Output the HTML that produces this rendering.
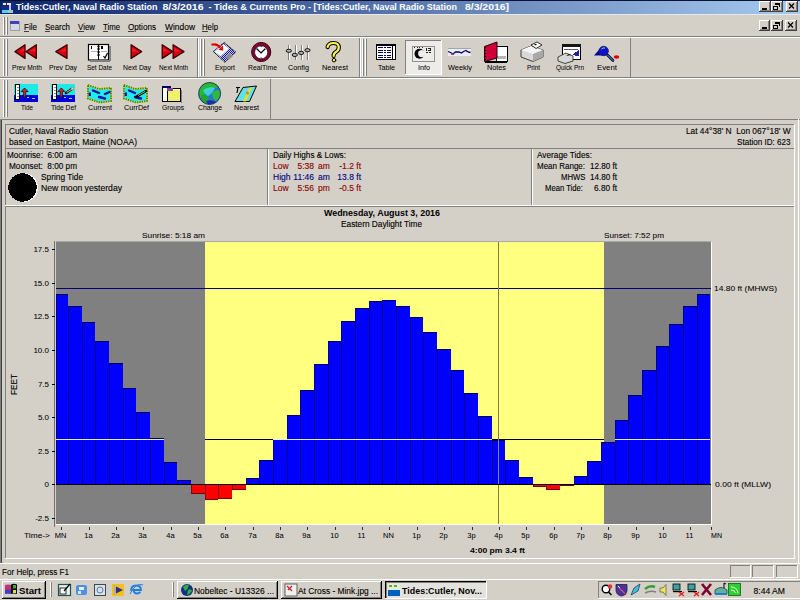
<!DOCTYPE html><html><head><meta charset="utf-8"><style>html,body{margin:0;padding:0;width:800px;height:600px;overflow:hidden;background:#D4D0C8;font-family:"Liberation Sans",sans-serif}text{white-space:pre}</style></head><body><svg width="800" height="600" viewBox="0 0 800 600" shape-rendering="crispEdges" font-family="'Liberation Sans', sans-serif" style="display:block"><rect x="0" y="0" width="800" height="600" fill="#D4D0C8" />
<defs><linearGradient id="tg" x1="0" x2="1" y1="0" y2="0"><stop offset="0" stop-color="#0A246A"/><stop offset="1" stop-color="#A6CAF0"/></linearGradient></defs>
<rect x="0" y="0" width="800" height="14" fill="url(#tg)" />
<rect x="0" y="14" width="800" height="1" fill="#E8E8E8" />
<rect x="2" y="2" width="12" height="11" fill="#102890" />
<rect x="3" y="3" width="3" height="1.5" fill="#E0F0D0" />
<rect x="7" y="3" width="4" height="1.5" fill="#E8F0C0" />
<rect x="3" y="4.5" width="8" height="1" fill="#203020" />
<rect x="9" y="5" width="2" height="5" fill="#C0C8F0" />
<rect x="2" y="9.5" width="6" height="3" fill="#50D0E8" />
<rect x="8" y="10" width="5" height="2.5" fill="#A0C8C8" />
<text x="16" y="10" font-size="8.8" font-weight="700" fill="#FFFFFF" textLength="141.5" lengthAdjust="spacingAndGlyphs" >Tides:Cutler, Naval Radio Station</text>
<text x="162.5" y="10" font-size="8.8" font-weight="700" fill="#FFFFFF" textLength="41" lengthAdjust="spacingAndGlyphs" >8/3/2016</text>
<text x="208.5" y="10" font-size="8.8" font-weight="700" fill="#FFFFFF" textLength="102.5" lengthAdjust="spacingAndGlyphs" >- Tides &amp; Currents Pro -</text>
<text x="313.5" y="10" font-size="8.8" font-weight="700" fill="#FFFFFF" textLength="143.5" lengthAdjust="spacingAndGlyphs" >[Tides:Cutler, Naval Radio Station</text>
<text x="465" y="10" font-size="8.8" font-weight="700" fill="#FFFFFF" textLength="44" lengthAdjust="spacingAndGlyphs" >8/3/2016]</text>
<rect x="759" y="1" width="12" height="11" fill="#D4D0C8" />
<rect x="759" y="1" width="12" height="1" fill="#FFFFFF" />
<rect x="759" y="1" width="1" height="11" fill="#FFFFFF" />
<rect x="759" y="11" width="12" height="1" fill="#404040" />
<rect x="770" y="1" width="1" height="11" fill="#404040" />
<rect x="760" y="10" width="10" height="1" fill="#808080" />
<rect x="769" y="2" width="1" height="9" fill="#808080" />
<rect x="762" y="8" width="5" height="2" fill="#000" />
<rect x="771" y="1" width="12" height="11" fill="#D4D0C8" />
<rect x="771" y="1" width="12" height="1" fill="#FFFFFF" />
<rect x="771" y="1" width="1" height="11" fill="#FFFFFF" />
<rect x="771" y="11" width="12" height="1" fill="#404040" />
<rect x="782" y="1" width="1" height="11" fill="#404040" />
<rect x="772" y="10" width="10" height="1" fill="#808080" />
<rect x="781" y="2" width="1" height="9" fill="#808080" />
<rect x="775" y="3" width="5" height="2" fill="#000" />
<rect x="779" y="3" width="1" height="4" fill="#000" />
<rect x="773" y="5.5" width="5" height="1.5" fill="#000" />
<rect x="773" y="9" width="5" height="1" fill="#000" />
<rect x="773" y="5.5" width="1" height="4.5" fill="#000" />
<rect x="777" y="5.5" width="1" height="4.5" fill="#000" />
<rect x="786" y="1" width="12" height="11" fill="#D4D0C8" />
<rect x="786" y="1" width="12" height="1" fill="#FFFFFF" />
<rect x="786" y="1" width="1" height="11" fill="#FFFFFF" />
<rect x="786" y="11" width="12" height="1" fill="#404040" />
<rect x="797" y="1" width="1" height="11" fill="#404040" />
<rect x="787" y="10" width="10" height="1" fill="#808080" />
<rect x="796" y="2" width="1" height="9" fill="#808080" />
<path d="M789 3.5 L794 8.5 M794 3.5 L789 8.5" stroke="#000" stroke-width="1.3" shape-rendering="geometricPrecision"/>
<rect x="0" y="0" width="800" height="1" fill="#101030" />
<rect x="3" y="17" width="1" height="18" fill="#FFFFFF" />
<rect x="4" y="17" width="1" height="18" fill="#808080" />
<rect x="6" y="17" width="1" height="18" fill="#FFFFFF" />
<rect x="7" y="17" width="1" height="18" fill="#808080" />
<rect x="10" y="21" width="10" height="10" fill="#A0A0A0" />
<rect x="11" y="22" width="8" height="8" fill="#D8D8E0" />
<rect x="10" y="21" width="9" height="3" fill="#4040C0" />
<text x="24" y="30" font-size="8.5" fill="#000" stroke="#000" stroke-width="0.12" textLength="13" lengthAdjust="spacingAndGlyphs" >File</text>
<rect x="24" y="31" width="5" height="1" fill="#404040" />
<text x="45" y="30" font-size="8.5" fill="#000" stroke="#000" stroke-width="0.12" textLength="25" lengthAdjust="spacingAndGlyphs" >Search</text>
<rect x="45" y="31" width="5" height="1" fill="#404040" />
<text x="78" y="30" font-size="8.5" fill="#000" stroke="#000" stroke-width="0.12" textLength="17" lengthAdjust="spacingAndGlyphs" >View</text>
<rect x="78" y="31" width="6" height="1" fill="#404040" />
<text x="103" y="30" font-size="8.5" fill="#000" stroke="#000" stroke-width="0.12" textLength="17" lengthAdjust="spacingAndGlyphs" >Time</text>
<rect x="103" y="31" width="5" height="1" fill="#404040" />
<text x="128" y="30" font-size="8.5" fill="#000" stroke="#000" stroke-width="0.12" textLength="28" lengthAdjust="spacingAndGlyphs" >Options</text>
<rect x="128" y="31" width="6" height="1" fill="#404040" />
<text x="165" y="30" font-size="8.5" fill="#000" stroke="#000" stroke-width="0.12" textLength="30" lengthAdjust="spacingAndGlyphs" >Window</text>
<rect x="165" y="31" width="8" height="1" fill="#404040" />
<text x="202" y="30" font-size="8.5" fill="#000" stroke="#000" stroke-width="0.12" textLength="16" lengthAdjust="spacingAndGlyphs" >Help</text>
<rect x="202" y="31" width="6" height="1" fill="#404040" />
<rect x="759" y="20" width="11" height="11" fill="#D4D0C8" />
<rect x="759" y="20" width="11" height="1" fill="#FFFFFF" />
<rect x="759" y="20" width="1" height="11" fill="#FFFFFF" />
<rect x="759" y="30" width="11" height="1" fill="#404040" />
<rect x="769" y="20" width="1" height="11" fill="#404040" />
<rect x="760" y="29" width="9" height="1" fill="#808080" />
<rect x="768" y="21" width="1" height="9" fill="#808080" />
<rect x="762" y="27" width="5" height="2" fill="#000" />
<rect x="771" y="20" width="12" height="11" fill="#D4D0C8" />
<rect x="771" y="20" width="12" height="1" fill="#FFFFFF" />
<rect x="771" y="20" width="1" height="11" fill="#FFFFFF" />
<rect x="771" y="30" width="12" height="1" fill="#404040" />
<rect x="782" y="20" width="1" height="11" fill="#404040" />
<rect x="772" y="29" width="10" height="1" fill="#808080" />
<rect x="781" y="21" width="1" height="9" fill="#808080" />
<rect x="775" y="22" width="5" height="2" fill="#000" />
<rect x="779" y="22" width="1" height="4" fill="#000" />
<rect x="773" y="24.5" width="5" height="1.5" fill="#000" />
<rect x="773" y="28" width="5" height="1" fill="#000" />
<rect x="773" y="24.5" width="1" height="4.5" fill="#000" />
<rect x="777" y="24.5" width="1" height="4.5" fill="#000" />
<rect x="785" y="20" width="12" height="11" fill="#D4D0C8" />
<rect x="785" y="20" width="12" height="1" fill="#FFFFFF" />
<rect x="785" y="20" width="1" height="11" fill="#FFFFFF" />
<rect x="785" y="30" width="12" height="1" fill="#404040" />
<rect x="796" y="20" width="1" height="11" fill="#404040" />
<rect x="786" y="29" width="10" height="1" fill="#808080" />
<rect x="795" y="21" width="1" height="9" fill="#808080" />
<path d="M788 22.5 L793 27.5 M793 22.5 L788 27.5" stroke="#000" stroke-width="1.3" shape-rendering="geometricPrecision"/>
<rect x="0" y="36" width="800" height="1" fill="#808080" />
<rect x="0" y="37" width="800" height="1" fill="#FFFFFF" />
<rect x="0" y="77" width="800" height="1" fill="#808080" />
<rect x="0" y="78" width="800" height="1" fill="#FFFFFF" />
<rect x="3" y="39" width="1" height="37" fill="#FFFFFF" />
<rect x="4" y="39" width="1" height="37" fill="#808080" />
<rect x="6" y="39" width="1" height="37" fill="#FFFFFF" />
<rect x="7" y="39" width="1" height="37" fill="#808080" />
<rect x="197" y="38" width="1" height="39" fill="#808080" />
<rect x="198" y="38" width="1" height="39" fill="#FFFFFF" />
<rect x="200" y="39" width="1" height="37" fill="#FFFFFF" />
<rect x="201" y="39" width="1" height="37" fill="#808080" />
<rect x="203" y="39" width="1" height="37" fill="#FFFFFF" />
<rect x="204" y="39" width="1" height="37" fill="#808080" />
<rect x="359" y="38" width="1" height="39" fill="#808080" />
<rect x="360" y="38" width="1" height="39" fill="#FFFFFF" />
<rect x="362" y="39" width="1" height="37" fill="#FFFFFF" />
<rect x="363" y="39" width="1" height="37" fill="#808080" />
<rect x="365" y="39" width="1" height="37" fill="#FFFFFF" />
<rect x="366" y="39" width="1" height="37" fill="#808080" />
<rect x="630" y="38" width="1" height="39" fill="#808080" />
<rect x="406" y="41" width="36" height="34" fill="#EEECE8" />
<rect x="405" y="40" width="37" height="1" fill="#808080" />
<rect x="405" y="40" width="1" height="35" fill="#808080" />
<rect x="405" y="74" width="37" height="1" fill="#FFFFFF" />
<rect x="441" y="40" width="1" height="35" fill="#FFFFFF" />
<text x="12.0" y="69.6" font-size="8" fill="#000" stroke="#000" stroke-width="0.048" textLength="30" lengthAdjust="spacingAndGlyphs" >Prev Mnth</text>
<text x="49.0" y="69.6" font-size="8" fill="#000" stroke="#000" stroke-width="0.048" textLength="28" lengthAdjust="spacingAndGlyphs" >Prev Day</text>
<text x="87.0" y="69.6" font-size="8" fill="#000" stroke="#000" stroke-width="0.048" textLength="25" lengthAdjust="spacingAndGlyphs" >Set Date</text>
<text x="123.0" y="69.6" font-size="8" fill="#000" stroke="#000" stroke-width="0.048" textLength="28" lengthAdjust="spacingAndGlyphs" >Next Day</text>
<text x="159.0" y="69.6" font-size="8" fill="#000" stroke="#000" stroke-width="0.048" textLength="29" lengthAdjust="spacingAndGlyphs" >Next Mnth</text>
<text x="215.0" y="69.6" font-size="8" fill="#000" stroke="#000" stroke-width="0.048" textLength="20" lengthAdjust="spacingAndGlyphs" >Export</text>
<text x="248.0" y="69.6" font-size="8" fill="#000" stroke="#000" stroke-width="0.048" textLength="29" lengthAdjust="spacingAndGlyphs" >RealTime</text>
<text x="288.0" y="69.6" font-size="8" fill="#000" stroke="#000" stroke-width="0.048" textLength="21" lengthAdjust="spacingAndGlyphs" >Config</text>
<text x="322.0" y="69.6" font-size="8" fill="#000" stroke="#000" stroke-width="0.048" textLength="26" lengthAdjust="spacingAndGlyphs" >Nearest</text>
<text x="378.0" y="69.6" font-size="8" fill="#000" stroke="#000" stroke-width="0.048" textLength="17" lengthAdjust="spacingAndGlyphs" >Table</text>
<text x="418.0" y="69.6" font-size="8" fill="#000" stroke="#000" stroke-width="0.048" textLength="12" lengthAdjust="spacingAndGlyphs" >Info</text>
<text x="448.0" y="69.6" font-size="8" fill="#000" stroke="#000" stroke-width="0.048" textLength="24" lengthAdjust="spacingAndGlyphs" >Weekly</text>
<text x="487.0" y="69.6" font-size="8" fill="#000" stroke="#000" stroke-width="0.048" textLength="19" lengthAdjust="spacingAndGlyphs" >Notes</text>
<text x="527.0" y="69.6" font-size="8" fill="#000" stroke="#000" stroke-width="0.048" textLength="13" lengthAdjust="spacingAndGlyphs" >Print</text>
<text x="556.0" y="69.6" font-size="8" fill="#000" stroke="#000" stroke-width="0.048" textLength="28" lengthAdjust="spacingAndGlyphs" >Quick Prn</text>
<text x="597.0" y="69.6" font-size="8" fill="#000" stroke="#000" stroke-width="0.048" textLength="20" lengthAdjust="spacingAndGlyphs" >Event</text>
<rect x="3" y="80" width="1" height="37" fill="#FFFFFF" />
<rect x="4" y="80" width="1" height="37" fill="#808080" />
<rect x="6" y="80" width="1" height="37" fill="#FFFFFF" />
<rect x="7" y="80" width="1" height="37" fill="#808080" />
<rect x="270" y="79" width="1" height="40" fill="#808080" />
<text x="21.0" y="110.3" font-size="8" fill="#000" stroke="#000" stroke-width="0.048" textLength="12" lengthAdjust="spacingAndGlyphs" >Tide</text>
<text x="51.0" y="110.3" font-size="8" fill="#000" stroke="#000" stroke-width="0.048" textLength="25" lengthAdjust="spacingAndGlyphs" >Tide Def</text>
<text x="88.0" y="110.3" font-size="8" fill="#000" stroke="#000" stroke-width="0.048" textLength="24" lengthAdjust="spacingAndGlyphs" >Current</text>
<text x="124.0" y="110.3" font-size="8" fill="#000" stroke="#000" stroke-width="0.048" textLength="25" lengthAdjust="spacingAndGlyphs" >CurrDef</text>
<text x="162.0" y="110.3" font-size="8" fill="#000" stroke="#000" stroke-width="0.048" textLength="22" lengthAdjust="spacingAndGlyphs" >Groups</text>
<text x="198.0" y="110.3" font-size="8" fill="#000" stroke="#000" stroke-width="0.048" textLength="24" lengthAdjust="spacingAndGlyphs" >Change</text>
<text x="234.0" y="110.3" font-size="8" fill="#000" stroke="#000" stroke-width="0.048" textLength="25" lengthAdjust="spacingAndGlyphs" >Nearest</text>
<rect x="0" y="119" width="1" height="444" fill="#808080" />
<rect x="1" y="119" width="1" height="444" fill="#404040" />
<rect x="0" y="119" width="800" height="1" fill="#808080" />
<rect x="5" y="124" width="790" height="1" fill="#808080" />
<rect x="5" y="124" width="1" height="25" fill="#808080" />
<rect x="5" y="148" width="790" height="1" fill="#FFFFFF" />
<rect x="794" y="124" width="1" height="25" fill="#FFFFFF" />
<text x="9" y="134" font-size="8.5" fill="#000" stroke="#000" stroke-width="0.12" textLength="99" lengthAdjust="spacingAndGlyphs" >Cutler, Naval Radio Station</text>
<text x="9" y="145" font-size="8.5" fill="#000" stroke="#000" stroke-width="0.12" textLength="128" lengthAdjust="spacingAndGlyphs" >based on Eastport, Maine (NOAA)</text>
<text x="686" y="134" font-size="8.5" fill="#000" stroke="#000" stroke-width="0.12" textLength="104.5" lengthAdjust="spacingAndGlyphs" >Lat 44°38' N  Lon 067°18' W</text>
<text x="737" y="145" font-size="8.5" fill="#000" stroke="#000" stroke-width="0.12" textLength="53.5" lengthAdjust="spacingAndGlyphs" >Station ID: 623</text>
<rect x="5" y="148" width="790" height="1" fill="#808080" />
<rect x="5" y="148" width="1" height="58" fill="#808080" />
<rect x="5" y="205" width="790" height="1" fill="#FFFFFF" />
<rect x="794" y="148" width="1" height="58" fill="#FFFFFF" />
<rect x="267" y="149" width="1" height="56" fill="#808080" />
<rect x="268" y="149" width="1" height="56" fill="#FFFFFF" />
<rect x="531" y="149" width="1" height="56" fill="#808080" />
<rect x="532" y="149" width="1" height="56" fill="#FFFFFF" />
<text x="7" y="158" font-size="8.5" fill="#000" stroke="#000" stroke-width="0.12" textLength="70" lengthAdjust="spacingAndGlyphs" >Moonrise:  6:00 am</text>
<text x="9" y="169" font-size="8.5" fill="#000" stroke="#000" stroke-width="0.12" textLength="68" lengthAdjust="spacingAndGlyphs" >Moonset:  8:00 pm</text>
<text x="41" y="180" font-size="8.5" fill="#000" stroke="#000" stroke-width="0.12" textLength="42" lengthAdjust="spacingAndGlyphs" >Spring Tide</text>
<text x="41" y="191" font-size="8.5" fill="#000" stroke="#000" stroke-width="0.12" textLength="81" lengthAdjust="spacingAndGlyphs" >New moon yesterday</text>
<circle cx="23.5" cy="187.5" r="14.5" fill="#FFFFFF"/>
<circle cx="22.5" cy="187.5" r="14.2" fill="#000"/>
<text x="273" y="158" font-size="8.5" fill="#000" stroke="#000" stroke-width="0.12" textLength="73" lengthAdjust="spacingAndGlyphs" >Daily Highs &amp; Lows:</text>
<text x="273" y="169" font-size="8.5" fill="#8B0000" stroke="#8B0000" stroke-width="0.12" >Low</text>
<text x="314" y="169" font-size="8.5" text-anchor="end" fill="#8B0000" stroke="#8B0000" stroke-width="0.12" >5:38</text>
<text x="318" y="169" font-size="8.5" fill="#8B0000" stroke="#8B0000" stroke-width="0.12" >am</text>
<text x="361" y="169" font-size="8.5" text-anchor="end" fill="#8B0000" stroke="#8B0000" stroke-width="0.12" >-1.2 ft</text>
<text x="273" y="180" font-size="8.5" fill="#000080" stroke="#000080" stroke-width="0.12" >High</text>
<text x="314" y="180" font-size="8.5" text-anchor="end" fill="#000080" stroke="#000080" stroke-width="0.12" >11:46</text>
<text x="318" y="180" font-size="8.5" fill="#000080" stroke="#000080" stroke-width="0.12" >am</text>
<text x="361" y="180" font-size="8.5" text-anchor="end" fill="#000080" stroke="#000080" stroke-width="0.12" >13.8 ft</text>
<text x="273" y="191" font-size="8.5" fill="#8B0000" stroke="#8B0000" stroke-width="0.12" >Low</text>
<text x="314" y="191" font-size="8.5" text-anchor="end" fill="#8B0000" stroke="#8B0000" stroke-width="0.12" >5:56</text>
<text x="318" y="191" font-size="8.5" fill="#8B0000" stroke="#8B0000" stroke-width="0.12" >pm</text>
<text x="361" y="191" font-size="8.5" text-anchor="end" fill="#8B0000" stroke="#8B0000" stroke-width="0.12" >-0.5 ft</text>
<text x="537" y="158" font-size="8.5" fill="#000" stroke="#000" stroke-width="0.12" textLength="55" lengthAdjust="spacingAndGlyphs" >Average Tides:</text>
<text x="537" y="169" font-size="8.5" fill="#000" stroke="#000" stroke-width="0.12" textLength="48" lengthAdjust="spacingAndGlyphs" >Mean Range:</text>
<text x="590" y="169" font-size="8.5" fill="#000" stroke="#000" stroke-width="0.12" textLength="27" lengthAdjust="spacingAndGlyphs" >12.80 ft</text>
<text x="561" y="180" font-size="8.5" fill="#000" stroke="#000" stroke-width="0.12" textLength="24.5" lengthAdjust="spacingAndGlyphs" >MHWS</text>
<text x="590" y="180" font-size="8.5" fill="#000" stroke="#000" stroke-width="0.12" textLength="27" lengthAdjust="spacingAndGlyphs" >14.80 ft</text>
<text x="545" y="191" font-size="8.5" fill="#000" stroke="#000" stroke-width="0.12" textLength="38" lengthAdjust="spacingAndGlyphs" >Mean Tide:</text>
<text x="594" y="191" font-size="8.5" fill="#000" stroke="#000" stroke-width="0.12" textLength="23" lengthAdjust="spacingAndGlyphs" >6.80 ft</text>
<rect x="5" y="206" width="790" height="1" fill="#808080" />
<rect x="5" y="206" width="1" height="353" fill="#808080" />
<rect x="5" y="558" width="790" height="1" fill="#FFFFFF" />
<rect x="794" y="206" width="1" height="353" fill="#FFFFFF" />
<text x="382" y="216" font-size="8.8" font-weight="700" text-anchor="middle" fill="#000" textLength="116" lengthAdjust="spacingAndGlyphs" >Wednesday, August 3, 2016</text>
<text x="381.5" y="227" font-size="8.5" text-anchor="middle" fill="#000" stroke="#000" stroke-width="0.12" textLength="81" lengthAdjust="spacingAndGlyphs" >Eastern Daylight Time</text>
<text x="142" y="238" font-size="8" fill="#000" stroke="#000" stroke-width="0.048" textLength="63" lengthAdjust="spacingAndGlyphs" >Sunrise: 5:18 am</text>
<text x="604" y="238" font-size="8" fill="#000" stroke="#000" stroke-width="0.048" textLength="60" lengthAdjust="spacingAndGlyphs" >Sunset: 7:52 pm</text>
<rect x="56" y="242" width="655" height="282" fill="#808080" />
<rect x="205" y="242" width="399" height="282" fill="#FFFF80" />
<rect x="54" y="241" width="1" height="286" fill="#707070" />
<rect x="56" y="241" width="655" height="1" fill="#A8A8A8" />
<rect x="711" y="242" width="1" height="283" fill="#FFFFFF" />
<rect x="56" y="524" width="656" height="1" fill="#FFFFFF" />
<rect x="52" y="249" width="3" height="1" fill="#000" />
<text x="49" y="252" font-size="8" text-anchor="end" fill="#000" stroke="#000" stroke-width="0.048" >17.5</text>
<rect x="52" y="283" width="3" height="1" fill="#000" />
<text x="49" y="286" font-size="8" text-anchor="end" fill="#000" stroke="#000" stroke-width="0.048" >15.0</text>
<rect x="52" y="316" width="3" height="1" fill="#000" />
<text x="49" y="319" font-size="8" text-anchor="end" fill="#000" stroke="#000" stroke-width="0.048" >12.5</text>
<rect x="52" y="350" width="3" height="1" fill="#000" />
<text x="49" y="353" font-size="8" text-anchor="end" fill="#000" stroke="#000" stroke-width="0.048" >10.0</text>
<rect x="52" y="384" width="3" height="1" fill="#000" />
<text x="49" y="387" font-size="8" text-anchor="end" fill="#000" stroke="#000" stroke-width="0.048" >7.5</text>
<rect x="52" y="417" width="3" height="1" fill="#000" />
<text x="49" y="420" font-size="8" text-anchor="end" fill="#000" stroke="#000" stroke-width="0.048" >5.0</text>
<rect x="52" y="451" width="3" height="1" fill="#000" />
<text x="49" y="454" font-size="8" text-anchor="end" fill="#000" stroke="#000" stroke-width="0.048" >2.5</text>
<rect x="52" y="484" width="3" height="1" fill="#000" />
<text x="49" y="487" font-size="8" text-anchor="end" fill="#000" stroke="#000" stroke-width="0.048" >0</text>
<rect x="52" y="518" width="3" height="1" fill="#000" />
<text x="49" y="521" font-size="8" text-anchor="end" fill="#000" stroke="#000" stroke-width="0.048" >-2.5</text>
<text transform="translate(16.8,395) rotate(-90)" font-size="8.8" stroke="#000" stroke-width="0.1" textLength="21" lengthAdjust="spacingAndGlyphs">FEET</text>
<rect x="56" y="294" width="12" height="190" fill="#0000FF" />
<rect x="56" y="294" width="1" height="190" fill="#000090" />
<rect x="56" y="294" width="12" height="1" fill="#000060" />
<rect x="68" y="306" width="14" height="178" fill="#0000FF" />
<rect x="68" y="306" width="1" height="178" fill="#000090" />
<rect x="68" y="306" width="14" height="1" fill="#000060" />
<rect x="82" y="322" width="13" height="162" fill="#0000FF" />
<rect x="82" y="322" width="1" height="162" fill="#000090" />
<rect x="82" y="322" width="13" height="1" fill="#000060" />
<rect x="95" y="341" width="14" height="143" fill="#0000FF" />
<rect x="95" y="341" width="1" height="143" fill="#000090" />
<rect x="95" y="341" width="14" height="1" fill="#000060" />
<rect x="109" y="363" width="14" height="121" fill="#0000FF" />
<rect x="109" y="363" width="1" height="121" fill="#000090" />
<rect x="109" y="363" width="14" height="1" fill="#000060" />
<rect x="123" y="388" width="13" height="96" fill="#0000FF" />
<rect x="123" y="388" width="1" height="96" fill="#000090" />
<rect x="123" y="388" width="13" height="1" fill="#000060" />
<rect x="136" y="412" width="14" height="72" fill="#0000FF" />
<rect x="136" y="412" width="1" height="72" fill="#000090" />
<rect x="136" y="412" width="14" height="1" fill="#000060" />
<rect x="150" y="438" width="14" height="46" fill="#0000FF" />
<rect x="150" y="438" width="1" height="46" fill="#000090" />
<rect x="150" y="438" width="14" height="1" fill="#000060" />
<rect x="164" y="462" width="13" height="22" fill="#0000FF" />
<rect x="164" y="462" width="1" height="22" fill="#000090" />
<rect x="164" y="462" width="13" height="1" fill="#000060" />
<rect x="177" y="480" width="14" height="4" fill="#0000FF" />
<rect x="177" y="480" width="1" height="4" fill="#000090" />
<rect x="177" y="480" width="14" height="1" fill="#000060" />
<rect x="191" y="484" width="14" height="10" fill="#FF0000" />
<rect x="191" y="484" width="1" height="10" fill="#900000" />
<rect x="191" y="493" width="14" height="1" fill="#700000" />
<rect x="205" y="484" width="13" height="16" fill="#FF0000" />
<rect x="205" y="484" width="1" height="16" fill="#900000" />
<rect x="205" y="499" width="13" height="1" fill="#700000" />
<rect x="218" y="484" width="14" height="15" fill="#FF0000" />
<rect x="218" y="484" width="1" height="15" fill="#900000" />
<rect x="218" y="498" width="14" height="1" fill="#700000" />
<rect x="232" y="484" width="14" height="6" fill="#FF0000" />
<rect x="232" y="484" width="1" height="6" fill="#900000" />
<rect x="232" y="489" width="14" height="1" fill="#700000" />
<rect x="246" y="478" width="13" height="6" fill="#0000FF" />
<rect x="246" y="478" width="1" height="6" fill="#000090" />
<rect x="246" y="478" width="13" height="1" fill="#000060" />
<rect x="259" y="460" width="14" height="24" fill="#0000FF" />
<rect x="259" y="460" width="1" height="24" fill="#000090" />
<rect x="259" y="460" width="14" height="1" fill="#000060" />
<rect x="273" y="439" width="14" height="45" fill="#0000FF" />
<rect x="273" y="439" width="1" height="45" fill="#000090" />
<rect x="273" y="439" width="14" height="1" fill="#000060" />
<rect x="287" y="415" width="13" height="69" fill="#0000FF" />
<rect x="287" y="415" width="1" height="69" fill="#000090" />
<rect x="287" y="415" width="13" height="1" fill="#000060" />
<rect x="300" y="390" width="14" height="94" fill="#0000FF" />
<rect x="300" y="390" width="1" height="94" fill="#000090" />
<rect x="300" y="390" width="14" height="1" fill="#000060" />
<rect x="314" y="364" width="14" height="120" fill="#0000FF" />
<rect x="314" y="364" width="1" height="120" fill="#000090" />
<rect x="314" y="364" width="14" height="1" fill="#000060" />
<rect x="328" y="341" width="13" height="143" fill="#0000FF" />
<rect x="328" y="341" width="1" height="143" fill="#000090" />
<rect x="328" y="341" width="13" height="1" fill="#000060" />
<rect x="341" y="321" width="14" height="163" fill="#0000FF" />
<rect x="341" y="321" width="1" height="163" fill="#000090" />
<rect x="341" y="321" width="14" height="1" fill="#000060" />
<rect x="355" y="308" width="14" height="176" fill="#0000FF" />
<rect x="355" y="308" width="1" height="176" fill="#000090" />
<rect x="355" y="308" width="14" height="1" fill="#000060" />
<rect x="369" y="301" width="13" height="183" fill="#0000FF" />
<rect x="369" y="301" width="1" height="183" fill="#000090" />
<rect x="369" y="301" width="13" height="1" fill="#000060" />
<rect x="382" y="300" width="14" height="184" fill="#0000FF" />
<rect x="382" y="300" width="1" height="184" fill="#000090" />
<rect x="382" y="300" width="14" height="1" fill="#000060" />
<rect x="396" y="306" width="14" height="178" fill="#0000FF" />
<rect x="396" y="306" width="1" height="178" fill="#000090" />
<rect x="396" y="306" width="14" height="1" fill="#000060" />
<rect x="410" y="317" width="13" height="167" fill="#0000FF" />
<rect x="410" y="317" width="1" height="167" fill="#000090" />
<rect x="410" y="317" width="13" height="1" fill="#000060" />
<rect x="423" y="332" width="14" height="152" fill="#0000FF" />
<rect x="423" y="332" width="1" height="152" fill="#000090" />
<rect x="423" y="332" width="14" height="1" fill="#000060" />
<rect x="437" y="349" width="14" height="135" fill="#0000FF" />
<rect x="437" y="349" width="1" height="135" fill="#000090" />
<rect x="437" y="349" width="14" height="1" fill="#000060" />
<rect x="451" y="370" width="13" height="114" fill="#0000FF" />
<rect x="451" y="370" width="1" height="114" fill="#000090" />
<rect x="451" y="370" width="13" height="1" fill="#000060" />
<rect x="464" y="393" width="14" height="91" fill="#0000FF" />
<rect x="464" y="393" width="1" height="91" fill="#000090" />
<rect x="464" y="393" width="14" height="1" fill="#000060" />
<rect x="478" y="416" width="14" height="68" fill="#0000FF" />
<rect x="478" y="416" width="1" height="68" fill="#000090" />
<rect x="478" y="416" width="14" height="1" fill="#000060" />
<rect x="492" y="440" width="13" height="44" fill="#0000FF" />
<rect x="492" y="440" width="1" height="44" fill="#000090" />
<rect x="492" y="440" width="13" height="1" fill="#000060" />
<rect x="505" y="460" width="14" height="24" fill="#0000FF" />
<rect x="505" y="460" width="1" height="24" fill="#000090" />
<rect x="505" y="460" width="14" height="1" fill="#000060" />
<rect x="519" y="477" width="14" height="7" fill="#0000FF" />
<rect x="519" y="477" width="1" height="7" fill="#000090" />
<rect x="519" y="477" width="14" height="1" fill="#000060" />
<rect x="533" y="484" width="13" height="3" fill="#FF0000" />
<rect x="533" y="484" width="1" height="3" fill="#900000" />
<rect x="533" y="486" width="13" height="1" fill="#700000" />
<rect x="546" y="484" width="14" height="6" fill="#FF0000" />
<rect x="546" y="484" width="1" height="6" fill="#900000" />
<rect x="546" y="489" width="14" height="1" fill="#700000" />
<rect x="560" y="484" width="14" height="2" fill="#FF0000" />
<rect x="560" y="484" width="1" height="2" fill="#900000" />
<rect x="560" y="485" width="14" height="1" fill="#700000" />
<rect x="574" y="476" width="13" height="8" fill="#0000FF" />
<rect x="574" y="476" width="1" height="8" fill="#000090" />
<rect x="574" y="476" width="13" height="1" fill="#000060" />
<rect x="587" y="461" width="14" height="23" fill="#0000FF" />
<rect x="587" y="461" width="1" height="23" fill="#000090" />
<rect x="587" y="461" width="14" height="1" fill="#000060" />
<rect x="601" y="442" width="14" height="42" fill="#0000FF" />
<rect x="601" y="442" width="1" height="42" fill="#000090" />
<rect x="601" y="442" width="14" height="1" fill="#000060" />
<rect x="615" y="420" width="13" height="64" fill="#0000FF" />
<rect x="615" y="420" width="1" height="64" fill="#000090" />
<rect x="615" y="420" width="13" height="1" fill="#000060" />
<rect x="628" y="395" width="14" height="89" fill="#0000FF" />
<rect x="628" y="395" width="1" height="89" fill="#000090" />
<rect x="628" y="395" width="14" height="1" fill="#000060" />
<rect x="642" y="370" width="14" height="114" fill="#0000FF" />
<rect x="642" y="370" width="1" height="114" fill="#000090" />
<rect x="642" y="370" width="14" height="1" fill="#000060" />
<rect x="656" y="346" width="13" height="138" fill="#0000FF" />
<rect x="656" y="346" width="1" height="138" fill="#000090" />
<rect x="656" y="346" width="13" height="1" fill="#000060" />
<rect x="669" y="324" width="14" height="160" fill="#0000FF" />
<rect x="669" y="324" width="1" height="160" fill="#000090" />
<rect x="669" y="324" width="14" height="1" fill="#000060" />
<rect x="683" y="306" width="14" height="178" fill="#0000FF" />
<rect x="683" y="306" width="1" height="178" fill="#000090" />
<rect x="683" y="306" width="14" height="1" fill="#000060" />
<rect x="697" y="294" width="13" height="190" fill="#0000FF" />
<rect x="697" y="294" width="1" height="190" fill="#000090" />
<rect x="697" y="294" width="13" height="1" fill="#000060" />
<rect x="56" y="484" width="655" height="1" fill="#000000" />
<rect x="56" y="288" width="655" height="1" fill="#000080" />
<rect x="56" y="439" width="149" height="1" fill="#808080" />
<rect x="604" y="439" width="107" height="1" fill="#808080" />
<rect x="205" y="439" width="399" height="1" fill="#000000" />
<rect x="56" y="439" width="12" height="1" fill="#E8E8F0" />
<rect x="68" y="439" width="14" height="1" fill="#E8E8F0" />
<rect x="82" y="439" width="13" height="1" fill="#E8E8F0" />
<rect x="95" y="439" width="14" height="1" fill="#E8E8F0" />
<rect x="109" y="439" width="14" height="1" fill="#E8E8F0" />
<rect x="123" y="439" width="13" height="1" fill="#E8E8F0" />
<rect x="136" y="439" width="14" height="1" fill="#E8E8F0" />
<rect x="150" y="439" width="14" height="1" fill="#E8E8F0" />
<rect x="273" y="439" width="14" height="1" fill="#E8E8F0" />
<rect x="287" y="439" width="13" height="1" fill="#E8E8F0" />
<rect x="300" y="439" width="14" height="1" fill="#E8E8F0" />
<rect x="314" y="439" width="14" height="1" fill="#E8E8F0" />
<rect x="328" y="439" width="13" height="1" fill="#E8E8F0" />
<rect x="341" y="439" width="14" height="1" fill="#E8E8F0" />
<rect x="355" y="439" width="14" height="1" fill="#E8E8F0" />
<rect x="369" y="439" width="13" height="1" fill="#E8E8F0" />
<rect x="382" y="439" width="14" height="1" fill="#E8E8F0" />
<rect x="396" y="439" width="14" height="1" fill="#E8E8F0" />
<rect x="410" y="439" width="13" height="1" fill="#E8E8F0" />
<rect x="423" y="439" width="14" height="1" fill="#E8E8F0" />
<rect x="437" y="439" width="14" height="1" fill="#E8E8F0" />
<rect x="451" y="439" width="13" height="1" fill="#E8E8F0" />
<rect x="464" y="439" width="14" height="1" fill="#E8E8F0" />
<rect x="478" y="439" width="14" height="1" fill="#E8E8F0" />
<rect x="615" y="439" width="13" height="1" fill="#E8E8F0" />
<rect x="628" y="439" width="14" height="1" fill="#E8E8F0" />
<rect x="642" y="439" width="14" height="1" fill="#E8E8F0" />
<rect x="656" y="439" width="13" height="1" fill="#E8E8F0" />
<rect x="669" y="439" width="14" height="1" fill="#E8E8F0" />
<rect x="683" y="439" width="14" height="1" fill="#E8E8F0" />
<rect x="697" y="439" width="13" height="1" fill="#E8E8F0" />
<rect x="498" y="242" width="1" height="198" fill="#807850" />
<rect x="498" y="440" width="1" height="44" fill="#8080E0" />
<rect x="498" y="485" width="1" height="39" fill="#807850" />
<text x="714" y="291" font-size="8" fill="#000" stroke="#000" stroke-width="0.048" textLength="63" lengthAdjust="spacingAndGlyphs" >14.80 ft (MHWS)</text>
<text x="715" y="487" font-size="8" fill="#000" stroke="#000" stroke-width="0.048" textLength="56" lengthAdjust="spacingAndGlyphs" >0.00 ft (MLLW)</text>
<rect x="61" y="527" width="1" height="3" fill="#303030" />
<text x="60.5" y="538" font-size="7.5" text-anchor="middle" fill="#000" stroke="#000" stroke-width="0.048" >MN</text>
<rect x="89" y="527" width="1" height="3" fill="#303030" />
<text x="88.5" y="538" font-size="7.5" text-anchor="middle" fill="#000" stroke="#000" stroke-width="0.048" >1a</text>
<rect x="116" y="527" width="1" height="3" fill="#303030" />
<text x="115.5" y="538" font-size="7.5" text-anchor="middle" fill="#000" stroke="#000" stroke-width="0.048" >2a</text>
<rect x="143" y="527" width="1" height="3" fill="#303030" />
<text x="142.5" y="538" font-size="7.5" text-anchor="middle" fill="#000" stroke="#000" stroke-width="0.048" >3a</text>
<rect x="171" y="527" width="1" height="3" fill="#303030" />
<text x="170.5" y="538" font-size="7.5" text-anchor="middle" fill="#000" stroke="#000" stroke-width="0.048" >4a</text>
<rect x="198" y="527" width="1" height="3" fill="#303030" />
<text x="197.5" y="538" font-size="7.5" text-anchor="middle" fill="#000" stroke="#000" stroke-width="0.048" >5a</text>
<rect x="225" y="527" width="1" height="3" fill="#303030" />
<text x="224.5" y="538" font-size="7.5" text-anchor="middle" fill="#000" stroke="#000" stroke-width="0.048" >6a</text>
<rect x="253" y="527" width="1" height="3" fill="#303030" />
<text x="252.5" y="538" font-size="7.5" text-anchor="middle" fill="#000" stroke="#000" stroke-width="0.048" >7a</text>
<rect x="280" y="527" width="1" height="3" fill="#303030" />
<text x="279.5" y="538" font-size="7.5" text-anchor="middle" fill="#000" stroke="#000" stroke-width="0.048" >8a</text>
<rect x="307" y="527" width="1" height="3" fill="#303030" />
<text x="306.5" y="538" font-size="7.5" text-anchor="middle" fill="#000" stroke="#000" stroke-width="0.048" >9a</text>
<rect x="335" y="527" width="1" height="3" fill="#303030" />
<text x="334.5" y="538" font-size="7.5" text-anchor="middle" fill="#000" stroke="#000" stroke-width="0.048" >10</text>
<rect x="362" y="527" width="1" height="3" fill="#303030" />
<text x="361.5" y="538" font-size="7.5" text-anchor="middle" fill="#000" stroke="#000" stroke-width="0.048" >11</text>
<rect x="389" y="527" width="1" height="3" fill="#303030" />
<text x="388.5" y="538" font-size="7.5" text-anchor="middle" fill="#000" stroke="#000" stroke-width="0.048" >NN</text>
<rect x="417" y="527" width="1" height="3" fill="#303030" />
<text x="416.5" y="538" font-size="7.5" text-anchor="middle" fill="#000" stroke="#000" stroke-width="0.048" >1p</text>
<rect x="444" y="527" width="1" height="3" fill="#303030" />
<text x="443.5" y="538" font-size="7.5" text-anchor="middle" fill="#000" stroke="#000" stroke-width="0.048" >2p</text>
<rect x="472" y="527" width="1" height="3" fill="#303030" />
<text x="471.5" y="538" font-size="7.5" text-anchor="middle" fill="#000" stroke="#000" stroke-width="0.048" >3p</text>
<rect x="499" y="527" width="1" height="3" fill="#303030" />
<text x="498.5" y="538" font-size="7.5" text-anchor="middle" fill="#000" stroke="#000" stroke-width="0.048" >4p</text>
<rect x="526" y="527" width="1" height="3" fill="#303030" />
<text x="525.5" y="538" font-size="7.5" text-anchor="middle" fill="#000" stroke="#000" stroke-width="0.048" >5p</text>
<rect x="554" y="527" width="1" height="3" fill="#303030" />
<text x="553.5" y="538" font-size="7.5" text-anchor="middle" fill="#000" stroke="#000" stroke-width="0.048" >6p</text>
<rect x="581" y="527" width="1" height="3" fill="#303030" />
<text x="580.5" y="538" font-size="7.5" text-anchor="middle" fill="#000" stroke="#000" stroke-width="0.048" >7p</text>
<rect x="608" y="527" width="1" height="3" fill="#303030" />
<text x="607.5" y="538" font-size="7.5" text-anchor="middle" fill="#000" stroke="#000" stroke-width="0.048" >8p</text>
<rect x="636" y="527" width="1" height="3" fill="#303030" />
<text x="635.5" y="538" font-size="7.5" text-anchor="middle" fill="#000" stroke="#000" stroke-width="0.048" >9p</text>
<rect x="663" y="527" width="1" height="3" fill="#303030" />
<text x="662.5" y="538" font-size="7.5" text-anchor="middle" fill="#000" stroke="#000" stroke-width="0.048" >10</text>
<rect x="690" y="527" width="1" height="3" fill="#303030" />
<text x="689.5" y="538" font-size="7.5" text-anchor="middle" fill="#000" stroke="#000" stroke-width="0.048" >11</text>
<rect x="711" y="527" width="1" height="3" fill="#303030" />
<text x="711" y="538" font-size="7.5" fill="#000" stroke="#000" stroke-width="0.048" textLength="11" lengthAdjust="spacingAndGlyphs" >MN</text>
<text x="24" y="538" font-size="8" fill="#000" stroke="#000" stroke-width="0.048" textLength="26" lengthAdjust="spacingAndGlyphs" >Time-&gt;</text>
<text x="497.5" y="553" font-size="8" font-weight="700" text-anchor="middle" fill="#000" textLength="55" lengthAdjust="spacingAndGlyphs" >4:00 pm 3.4 ft</text>
<rect x="0" y="563" width="800" height="1" fill="#FFFFFF" />
<rect x="798" y="119" width="1" height="444" fill="#FFFFFF" />
<text x="2" y="575" font-size="8.5" fill="#000" stroke="#000" stroke-width="0.12" textLength="67" lengthAdjust="spacingAndGlyphs" >For Help, press F1</text>
<rect x="730" y="565" width="21" height="1" fill="#808080" />
<rect x="730" y="565" width="1" height="13" fill="#808080" />
<rect x="730" y="577" width="21" height="1" fill="#FFFFFF" />
<rect x="750" y="565" width="1" height="13" fill="#FFFFFF" />
<rect x="752" y="565" width="22" height="1" fill="#808080" />
<rect x="752" y="565" width="1" height="13" fill="#808080" />
<rect x="752" y="577" width="22" height="1" fill="#FFFFFF" />
<rect x="773" y="565" width="1" height="13" fill="#FFFFFF" />
<rect x="776" y="565" width="22" height="1" fill="#808080" />
<rect x="776" y="565" width="1" height="13" fill="#808080" />
<rect x="776" y="577" width="22" height="1" fill="#FFFFFF" />
<rect x="797" y="565" width="1" height="13" fill="#FFFFFF" />
<rect x="0" y="578" width="800" height="1" fill="#D4D0C8" />
<rect x="0" y="579" width="800" height="1" fill="#FFFFFF" />
<rect x="2" y="581" width="44" height="1" fill="#FFFFFF" />
<rect x="2" y="581" width="1" height="18" fill="#FFFFFF" />
<rect x="2" y="598" width="44" height="1" fill="#000" />
<rect x="45" y="581" width="1" height="18" fill="#000" />
<rect x="3" y="597" width="42" height="1" fill="#808080" />
<rect x="44" y="582" width="1" height="16" fill="#808080" />
<text x="19" y="594" font-size="9" font-weight="700" fill="#000" textLength="22" lengthAdjust="spacingAndGlyphs" >Start</text>
<rect x="177" y="581" width="101" height="1" fill="#FFFFFF" />
<rect x="177" y="581" width="1" height="18" fill="#FFFFFF" />
<rect x="177" y="598" width="101" height="1" fill="#000" />
<rect x="277" y="581" width="1" height="18" fill="#000" />
<rect x="178" y="597" width="99" height="1" fill="#808080" />
<rect x="276" y="582" width="1" height="16" fill="#808080" />
<text x="194" y="594" font-size="8.5" fill="#000" stroke="#000" stroke-width="0.12" textLength="80" lengthAdjust="spacingAndGlyphs" >Nobeltec - U13326 ...</text>
<rect x="281" y="581" width="101" height="1" fill="#FFFFFF" />
<rect x="281" y="581" width="1" height="18" fill="#FFFFFF" />
<rect x="281" y="598" width="101" height="1" fill="#000" />
<rect x="381" y="581" width="1" height="18" fill="#000" />
<rect x="282" y="597" width="99" height="1" fill="#808080" />
<rect x="380" y="582" width="1" height="16" fill="#808080" />
<text x="298" y="594" font-size="8.5" fill="#000" stroke="#000" stroke-width="0.12" textLength="80" lengthAdjust="spacingAndGlyphs" >At Cross - Mink.jpg ...</text>
<rect x="385" y="581" width="102" height="18" fill="#E4E2DC" />
<rect x="385" y="581" width="102" height="1" fill="#000" />
<rect x="385" y="581" width="1" height="18" fill="#000" />
<rect x="386" y="582" width="101" height="1" fill="#808080" />
<rect x="386" y="582" width="1" height="17" fill="#808080" />
<rect x="385" y="598" width="102" height="1" fill="#FFFFFF" />
<rect x="486" y="581" width="1" height="18" fill="#FFFFFF" />
<text x="402" y="594" font-size="8.5" font-weight="700" fill="#000" textLength="80" lengthAdjust="spacingAndGlyphs" >Tides:Cutler, Nov...</text>
<rect x="598" y="581" width="202" height="1" fill="#808080" />
<rect x="598" y="581" width="1" height="18" fill="#808080" />
<rect x="598" y="598" width="202" height="1" fill="#FFFFFF" />
<text x="753.5" y="594" font-size="8.5" fill="#000" stroke="#000" stroke-width="0.12" textLength="31.5" lengthAdjust="spacingAndGlyphs" >8:44 AM</text>
<rect x="50" y="582" width="1" height="15" fill="#FFFFFF" />
<rect x="51" y="582" width="1" height="15" fill="#808080" />
<rect x="172" y="582" width="1" height="15" fill="#FFFFFF" />
<rect x="173" y="582" width="1" height="15" fill="#808080" /><polygon points="15,51.599999999999994 25,44.8 25,58.4" fill="#D80010" stroke="#3A0000" stroke-width="1.3" stroke-linejoin="round" shape-rendering="geometricPrecision"/>
<polygon points="18.5,51.599999999999994 24.2,47.8 24.2,51.599999999999994" fill="#FF3030" opacity="0.6" shape-rendering="geometricPrecision"/>
<polygon points="26,51.599999999999994 36.3,44.8 36.3,58.4" fill="#D80010" stroke="#3A0000" stroke-width="1.3" stroke-linejoin="round" shape-rendering="geometricPrecision"/>
<polygon points="29.604999999999997,51.599999999999994 35.476,47.8 35.476,51.599999999999994" fill="#FF3030" opacity="0.6" shape-rendering="geometricPrecision"/>
<polygon points="55.8,51.599999999999994 67,44.8 67,58.4" fill="#D80010" stroke="#3A0000" stroke-width="1.3" stroke-linejoin="round" shape-rendering="geometricPrecision"/>
<polygon points="59.72,51.599999999999994 66.104,47.8 66.104,51.599999999999994" fill="#FF3030" opacity="0.6" shape-rendering="geometricPrecision"/>
<polygon points="141.6,51.599999999999994 131.1,44.8 131.1,58.4" fill="#D80010" stroke="#3A0000" stroke-width="1.3" stroke-linejoin="round" shape-rendering="geometricPrecision"/>
<polygon points="137.92499999999998,51.599999999999994 131.94,47.8 131.94,51.599999999999994" fill="#FF3030" opacity="0.6" shape-rendering="geometricPrecision"/>
<polygon points="172.7,51.599999999999994 162.2,44.8 162.2,58.4" fill="#D80010" stroke="#3A0000" stroke-width="1.3" stroke-linejoin="round" shape-rendering="geometricPrecision"/>
<polygon points="169.02499999999998,51.599999999999994 163.04,47.8 163.04,51.599999999999994" fill="#FF3030" opacity="0.6" shape-rendering="geometricPrecision"/>
<polygon points="184,51.599999999999994 173.1,44.8 173.1,58.4" fill="#D80010" stroke="#3A0000" stroke-width="1.3" stroke-linejoin="round" shape-rendering="geometricPrecision"/>
<polygon points="180.185,51.599999999999994 173.972,47.8 173.972,51.599999999999994" fill="#FF3030" opacity="0.6" shape-rendering="geometricPrecision"/>
<rect x="88.5" y="44.5" width="20" height="15.5" fill="#FFFFFF" stroke="#000" stroke-width="1.2" shape-rendering="geometricPrecision"/>
<rect x="109" y="46" width="1.5" height="15" fill="#808080"/><rect x="90" y="60" width="20" height="1.5" fill="#808080"/>
<line x1="98.5" y1="44" x2="98.5" y2="60" stroke="#000" stroke-width="1"/>
<ellipse cx="98.5" cy="46.5" rx="1.3" ry="0.9" fill="#000" shape-rendering="geometricPrecision"/>
<ellipse cx="98.5" cy="49" rx="1.3" ry="0.9" fill="#000" shape-rendering="geometricPrecision"/>
<ellipse cx="98.5" cy="52" rx="1.3" ry="0.9" fill="#000" shape-rendering="geometricPrecision"/>
<ellipse cx="98.5" cy="55" rx="1.3" ry="0.9" fill="#000" shape-rendering="geometricPrecision"/>
<rect x="90.5" y="46" width="1.3" height="3" fill="#000"/><rect x="101" y="46" width="2" height="3" fill="#000"/>
<rect x="90.5" y="51" width="6" height="0.8" fill="#B0B0B8"/><rect x="100.5" y="51" width="6" height="0.8" fill="#B0B0B8"/>
<rect x="90.5" y="53.5" width="6" height="0.8" fill="#B0B0B8"/><rect x="100.5" y="53.5" width="6" height="0.8" fill="#B0B0B8"/>
<rect x="90.5" y="56.5" width="6" height="0.8" fill="#B0B0B8"/><rect x="100.5" y="56.5" width="6" height="0.8" fill="#B0B0B8"/>
<path d="M103.5 56 L105 58 L107.5 53" stroke="#000" stroke-width="1.2" fill="none" shape-rendering="geometricPrecision"/>
<defs><pattern id="chk" width="2" height="2" patternUnits="userSpaceOnUse"><rect width="2" height="2" fill="#C8C8F8"/><rect width="1" height="1" fill="#101890"/><rect x="1" y="1" width="1" height="1" fill="#101890"/></pattern></defs>
<g shape-rendering="geometricPrecision">
<polygon points="213.3,51.5 224,42.5 235.7,52 224.9,62.3" fill="url(#chk)" stroke="#000" stroke-width="1" stroke-dasharray="1.2,0.8"/>
<polygon points="214.8,51.5 223.5,44 229,48.5 220.5,56.5" fill="#FFFFFF"/>
<polygon points="225,57 229.5,53 233,56 228.5,60" fill="#8A8A8A"/>
<path d="M211.5 44.8 Q216.5 43 220.5 47.5" stroke="#E00000" stroke-width="2.2" fill="none"/>
<polygon points="218.5,49.8 223,45.2 223.2,50.8" fill="#E00000"/>
</g>
<g shape-rendering="geometricPrecision">
<circle cx="261.2" cy="52" r="9.6" fill="#7A0A30" stroke="#40001A" stroke-width="1"/>
<circle cx="261.2" cy="52.3" r="6.6" fill="#FFFFFF" stroke="#30001A" stroke-width="0.8"/>
<path d="M256.5 48.5 L261 53 L264.5 49.5" stroke="#000" stroke-width="1.2" fill="none"/>
<rect x="264" y="48.5" width="1.5" height="1.5" fill="#000"/><rect x="260.7" y="46" width="1" height="1" fill="#000"/><rect x="260.7" y="57.5" width="1" height="1" fill="#000"/>
</g>
<rect x="288.0" y="45" width="1" height="15" fill="#808080"/><rect x="289.0" y="45" width="1" height="15" fill="#FFFFFF"/>
<rect x="294.5" y="45" width="1" height="15" fill="#808080"/><rect x="295.5" y="45" width="1" height="15" fill="#FFFFFF"/>
<rect x="300.9" y="45" width="1" height="15" fill="#808080"/><rect x="301.9" y="45" width="1" height="15" fill="#FFFFFF"/>
<rect x="307.2" y="45" width="1" height="15" fill="#808080"/><rect x="308.2" y="45" width="1" height="15" fill="#FFFFFF"/>
<g shape-rendering="geometricPrecision">
<ellipse cx="288.8" cy="50.8" rx="2.6" ry="1.6" fill="#B0B0B0" stroke="#000" stroke-width="0.9"/>
<ellipse cx="294.8" cy="54.9" rx="2.6" ry="1.6" fill="#B0B0B0" stroke="#000" stroke-width="0.9"/>
<ellipse cx="301.1" cy="52.9" rx="2.6" ry="1.6" fill="#B0B0B0" stroke="#000" stroke-width="0.9"/>
<ellipse cx="307.5" cy="50.2" rx="2.6" ry="1.6" fill="#B0B0B0" stroke="#000" stroke-width="0.9"/>
</g>
<g shape-rendering="geometricPrecision" fill="none" stroke-linecap="round">
<path d="M327.6 47 Q328.5 43 333.5 43 Q338.8 43 338.8 47.5 Q338.8 50.5 335.5 52.3 Q333.6 53.5 333.6 56" stroke="#000" stroke-width="4.2"/>
<path d="M327.6 47 Q328.5 43 333.5 43 Q338.8 43 338.8 47.5 Q338.8 50.5 335.5 52.3 Q333.6 53.5 333.6 56" stroke="#F8F840" stroke-width="2.2"/>
<circle cx="334" cy="60.2" r="1.8" fill="#F8F840" stroke="#000" stroke-width="1"/>
</g>
<rect x="376" y="44" width="20" height="16" fill="#000"/><rect x="377" y="46" width="15" height="13" fill="#FFFFFF"/><rect x="393" y="46" width="2" height="13" fill="#FFFFFF"/>
<rect x="378" y="47" width="4.5" height="1.2" fill="#000060"/><rect x="383.5" y="47" width="2" height="1.2" fill="#000060"/><rect x="387" y="47" width="4" height="1.2" fill="#000060"/>
<rect x="378" y="49.5" width="4.5" height="1.2" fill="#000060"/><rect x="383.5" y="49.5" width="2" height="1.2" fill="#000060"/><rect x="387" y="49.5" width="4" height="1.2" fill="#000060"/>
<rect x="378" y="52" width="4.5" height="1.2" fill="#000060"/><rect x="383.5" y="52" width="2" height="1.2" fill="#000060"/><rect x="387" y="52" width="4" height="1.2" fill="#000060"/>
<rect x="378" y="54.5" width="4.5" height="1.2" fill="#000060"/><rect x="383.5" y="54.5" width="2" height="1.2" fill="#000060"/><rect x="387" y="54.5" width="4" height="1.2" fill="#000060"/>
<rect x="378" y="57" width="4.5" height="1.2" fill="#000060"/><rect x="383.5" y="57" width="2" height="1.2" fill="#000060"/><rect x="387" y="57" width="4" height="1.2" fill="#000060"/>
<rect x="412.5" y="46.5" width="22" height="14.5" fill="none" stroke="#909090" stroke-width="1"/>
<g shape-rendering="geometricPrecision"><circle cx="419.5" cy="53.8" r="5" fill="#000"/><circle cx="421.8" cy="53.6" r="3.7" fill="#EEECE8"/></g>
<rect x="414" y="47.3" width="1.3" height="1" fill="#303030"/>
<rect x="416.5" y="47.3" width="1.3" height="1" fill="#303030"/>
<rect x="419" y="47.3" width="1.3" height="1" fill="#303030"/>
<rect x="421.5" y="47.3" width="1.3" height="1" fill="#303030"/>
<rect x="425.5" y="47.5" width="1.2" height="3" fill="#202020"/><rect x="427.5" y="47.5" width="3" height="1" fill="#202020"/><rect x="427.5" y="49.5" width="3" height="1" fill="#202020"/><rect x="429.5" y="47.5" width="1" height="3" fill="#202020"/>
<rect x="425.5" y="52" width="2" height="1.2" fill="#202020"/><rect x="428.5" y="52" width="2" height="1.2" fill="#202020"/>
<rect x="448" y="48" width="23" height="8" fill="#ECECF8"/><rect x="448" y="48" width="23" height="1" fill="#A0A8A0"/>
<path d="M448 51.5 L450.5 52.5 L453 54 L455.5 52 L459 52 L461.5 53 L463.5 51.5 L466 50.5 L468 52 L470.5 52.5" stroke="#000070" stroke-width="1.3" fill="none" shape-rendering="geometricPrecision"/>
<rect x="451" y="53" width="3" height="2" fill="#804020" opacity="0.8"/>
<rect x="496" y="46" width="11" height="15" fill="#FFFFFF" stroke="#000" stroke-width="1"/>
<rect x="497" y="56" width="9" height="3" fill="#B0B8B0"/>
<polygon points="484.5,46.5 497,42 497,58 484.5,61.5" fill="#D00038" stroke="#200010" stroke-width="1" shape-rendering="geometricPrecision"/>
<rect x="484" y="47" width="1.5" height="1" fill="#000"/>
<rect x="484" y="50" width="1.5" height="1" fill="#000"/>
<rect x="484" y="53" width="1.5" height="1" fill="#000"/>
<rect x="484" y="56" width="1.5" height="1" fill="#000"/>
<rect x="484" y="59" width="1.5" height="1" fill="#000"/>
<rect x="485" y="61" width="22" height="1.5" fill="#000"/>
<g shape-rendering="geometricPrecision">
<polygon points="521,50 531,46 543,50 543,57 533,61.5 521,57" fill="#D8D8D8" stroke="#303030" stroke-width="0.9"/>
<polygon points="521,50 531,46 543,50 533,54" fill="#F4F4F4"/>
<polygon points="533,54 543,50 543,57 533,61.5" fill="#A8A8A8"/>
<polygon points="531,45 537,42 542,45 536,48.5" fill="#FFFFFF" stroke="#000" stroke-width="0.8"/>
<rect x="534.5" y="44" width="2" height="1.2" fill="#000"/>
</g>
<rect x="562" y="44" width="18.5" height="15" fill="#FFFFFF" stroke="#000" stroke-width="1"/>
<rect x="562" y="44" width="18.5" height="2.5" fill="#101818"/>
<rect x="564" y="48.5" width="14" height="1.5" fill="#303050" opacity="0.8"/>
<polygon points="572,55 578.5,50 578.5,56" fill="#2020A0"/>
<g shape-rendering="geometricPrecision"><polygon points="558,57 566,53 573,56 573,61 565,63.5 558,61" fill="#D8D8D8" stroke="#202020" stroke-width="0.8"/><polygon points="566,56 569,54 571,55" fill="#000"/></g>
<g shape-rendering="geometricPrecision">
<polygon points="594,55.5 601,47.5 606,55.5" fill="#0000A0"/>
<circle cx="603.7" cy="51" r="4.7" fill="#1010D0" stroke="#202040" stroke-width="0.8"/>
<path d="M601.5 49 Q603 47.5 605 48" stroke="#80E0FF" stroke-width="1" fill="none"/>
<line x1="607.5" y1="55" x2="613" y2="60.5" stroke="#000030" stroke-width="2.6" stroke-linecap="round"/>
<line x1="607.5" y1="55" x2="613" y2="60.5" stroke="#60B0F0" stroke-width="1" stroke-linecap="round"/>
<ellipse cx="616.5" cy="57" rx="2.8" ry="1.8" fill="#E00000"/>
</g>
<rect x="14.3" y="84.3" width="23.4" height="11" fill="#20E8E8"/>
<rect x="14.3" y="95" width="23.4" height="6.6" fill="#0000D8"/>
<rect x="15" y="84" width="4.5" height="15" fill="#FFFFFF" stroke="#000" stroke-width="1"/>
<rect x="17" y="87" width="2" height="0.8" fill="#909090"/>
<rect x="17" y="90" width="2" height="0.8" fill="#909090"/>
<rect x="17" y="93" width="2" height="0.8" fill="#909090"/>
<rect x="17" y="96" width="2" height="0.8" fill="#909090"/>
<g shape-rendering="geometricPrecision"><polygon points="24.6,88 28.1,91.5 25.8,91.5 25.8,97 23.400000000000002,97 23.400000000000002,91.5 21.1,91.5" fill="#D02030" stroke="#200000" stroke-width="0.7"/></g>
<rect x="32" y="98" width="2.5" height="1" fill="#C0C0FF"/><rect x="27" y="97" width="2" height="1" fill="#C0C0FF"/>
<rect x="51.3" y="84.3" width="23.4" height="11" fill="#20E8E8"/>
<rect x="51.3" y="95" width="23.4" height="6.6" fill="#0000D8"/>
<rect x="52" y="84" width="4.5" height="15" fill="#FFFFFF" stroke="#000" stroke-width="1"/>
<rect x="54" y="87" width="2" height="0.8" fill="#909090"/>
<rect x="54" y="90" width="2" height="0.8" fill="#909090"/>
<rect x="54" y="93" width="2" height="0.8" fill="#909090"/>
<rect x="54" y="96" width="2" height="0.8" fill="#909090"/>
<g shape-rendering="geometricPrecision"><polygon points="61.3,88 64.8,91.5 62.5,91.5 62.5,97 60.099999999999994,97 60.099999999999994,91.5 57.8,91.5" fill="#D02030" stroke="#200000" stroke-width="0.7"/></g>
<rect x="69" y="98" width="2.5" height="1" fill="#C0C0FF"/><rect x="64" y="97" width="2" height="1" fill="#C0C0FF"/>
<g shape-rendering="geometricPrecision"><line x1="66" y1="93" x2="72.5" y2="88.5" stroke="#000" stroke-width="2.6" stroke-linecap="round"/><line x1="66.5" y1="92.5" x2="72" y2="89" stroke="#C8A060" stroke-width="1.2"/><circle cx="72.5" cy="88.5" r="1.2" fill="#FFD0D0"/></g>
<g shape-rendering="geometricPrecision">
<polygon points="88,85 99,89 111,88 111,101 100,102.5 88,98.5" fill="#20ECEC" stroke="#D8D030" stroke-width="1.8"/>
<polygon points="88,85 99,89 111,88 111,101 100,102.5 88,98.5" fill="none" stroke="#307830" stroke-width="1.8" stroke-dasharray="1.2,1.2"/>
<path d="M93 90.5 L99 93" stroke="#0010A0" stroke-width="2.4" stroke-linecap="round"/>
<path d="M89.8 92.5 L89.8 96" stroke="#0010A0" stroke-width="2.2"/>
<path d="M99 97 L105 98.5" stroke="#0010A0" stroke-width="2.4" stroke-linecap="round"/>
<path d="M105 94 L109.5 92" stroke="#0010A0" stroke-width="2.4" stroke-linecap="round"/>
</g>
<g shape-rendering="geometricPrecision">
<polygon points="124,85 135,89 147,88 147,101 136,102.5 124,98.5" fill="#20ECEC" stroke="#D8D030" stroke-width="1.8"/>
<polygon points="124,85 135,89 147,88 147,101 136,102.5 124,98.5" fill="none" stroke="#307830" stroke-width="1.8" stroke-dasharray="1.2,1.2"/>
<path d="M129 90.5 L135 93" stroke="#0010A0" stroke-width="2.4" stroke-linecap="round"/>
<path d="M125.8 92.5 L125.8 96" stroke="#0010A0" stroke-width="2.2"/>
<path d="M135 97 L141 98.5" stroke="#0010A0" stroke-width="2.4" stroke-linecap="round"/>
<line x1="136" y1="97" x2="146" y2="91" stroke="#000" stroke-width="2.6" stroke-linecap="round"/><line x1="138" y1="95.5" x2="145" y2="91.5" stroke="#C8A060" stroke-width="1"/>
</g>
<rect x="162.5" y="86" width="8" height="15" fill="#FFFFF0" stroke="#000" stroke-width="1"/><rect x="163" y="85.5" width="7" height="2" fill="#000070"/>
<rect x="167" y="88.5" width="13" height="13" fill="#F0F070" stroke="#000" stroke-width="1"/>
<rect x="167" y="88" width="6" height="3" fill="#9040A0"/><rect x="173" y="88.5" width="7" height="1.5" fill="#FFFFE0"/>
<rect x="180.5" y="90" width="1.5" height="12.5" fill="#808080"/>
<g shape-rendering="geometricPrecision">
<circle cx="209.6" cy="93.5" r="11" fill="#2878C8"/>
<path d="M199 92 Q200 84 209 82.6 Q216 83 219 87 Q212 88 208 91 Q204 95 200 98 Z" fill="#28B838"/>
<path d="M201 95 Q206 94 209 99 Q208 103 206 104 Q201 101 201 95 Z" fill="#20A828"/>
<path d="M212 93 Q217 88 220.5 91 Q221 97 216 101 Q212 98 212 93 Z" fill="#30B840"/>
<path d="M203 90 Q209 86 215 88 Q212 94 208 96 Q205 95 203 90 Z" fill="#40D8E8" opacity="0.85"/>
<path d="M206 101 Q212 99 216 102 Q212 104.5 208 104 Z" fill="#1830B0"/>
<circle cx="209.6" cy="93.5" r="11" fill="none" stroke="#102840" stroke-width="0.8"/>
</g>
<g shape-rendering="geometricPrecision">
<polygon points="235,101.5 243,87.5 256.5,86 249.5,101.5" fill="#60E0E8" stroke="#000" stroke-width="1"/>
<polygon points="243,101.5 249,88 252,87.5 246,101.5" fill="#E8E020"/>
<circle cx="247.5" cy="93" r="1.5" fill="#E08020"/>
<path d="M236 87.5 L240 87.5 M238 87.5 L237 93" stroke="#000" stroke-width="1.2"/>
</g>
<g shape-rendering="geometricPrecision">
<path d="M5 585 Q8 584 11 585 L11 594 Q8 593 5 594 Z" fill="#C03080"/>
<path d="M11 584.5 Q14 583 17 584.5 L17 589 Q14 588 11 589 Z" fill="#000"/>
<path d="M11 589 Q14 588 17 589 L17 594 Q14 593 11 594 Z" fill="#101010"/>
<rect x="13" y="585" width="3" height="3" fill="#40B040"/><rect x="13" y="590" width="3" height="3" fill="#E0E040"/>
<path d="M5 590 Q8 589 11 590 L11 594 Q8 593 5 594 Z" fill="#4040C0"/>
<rect x="58.5" y="584.5" width="12" height="11" fill="#E8F0F0" stroke="#205050" stroke-width="1.2"/>
<rect x="60" y="588" width="6" height="6" fill="#FFF" stroke="#000" stroke-width="0.8"/><line x1="64" y1="591" x2="70" y2="584" stroke="#000" stroke-width="1.2"/>
<rect x="76" y="585" width="11" height="10" rx="2" fill="#5090E0"/><rect x="79" y="587" width="5" height="3" fill="#E0F0FF"/><rect x="78" y="591" width="3" height="3" fill="#D0E8FF"/>
<rect x="94.5" y="584.5" width="11" height="11" fill="#D8E0E8" stroke="#404848" stroke-width="1"/><circle cx="100" cy="590" r="3" fill="none" stroke="#5080B0" stroke-width="1"/>
<rect x="112" y="584" width="12" height="12" fill="#F0C020"/><polygon points="114,585.5 123,590 114,594.5" fill="#303080"/><rect x="114" y="586" width="2" height="8" fill="#FFFFE0" opacity="0.6"/>
<path d="M131 591 Q131 585.5 136 585.5 Q141 585.5 141 590 L133.5 590 Q134 593.5 137 593.5 Q139 593.5 140.5 592" stroke="#2080E0" stroke-width="1.8" fill="none"/><path d="M130 594 Q136 582 143 585" stroke="#2080E0" stroke-width="1" fill="none"/>
<circle cx="187" cy="590" r="6" fill="#103080"/><path d="M183 587 Q186 584 189 585 Q188 589 185 591 Z" fill="#30B040"/><path d="M188 590 Q191 588 192 591 Q190 594 187 595 Z" fill="#30B040"/>
<rect x="285" y="584" width="12" height="12" fill="#F0F0F0" stroke="#404040" stroke-width="0.8"/><path d="M287 586 L292 591 M292 586 L288 590" stroke="#C02020" stroke-width="1.2"/>
<rect x="388" y="584" width="12" height="12" fill="#E0F0E0"/><rect x="388" y="590" width="12" height="6" fill="#0060C0"/><rect x="389" y="585" width="3" height="2" fill="#80A020"/><rect x="394" y="585" width="3" height="2" fill="#80A020"/>
<circle cx="606" cy="589" r="3.8" fill="#FFF" stroke="#000" stroke-width="1.4"/><line x1="608.5" y1="592" x2="611.5" y2="595" stroke="#000" stroke-width="1.6"/><circle cx="610" cy="586.5" r="2.2" fill="#E03040"/>
<path d="M616 584.5 L627 584.5 L627 590 Q627 595 621.5 596 Q616 595 616 590 Z" fill="#5030A0" stroke="#202040" stroke-width="0.8"/><line x1="618" y1="586" x2="625" y2="594" stroke="#FFF" stroke-width="1"/><line x1="620" y1="588" x2="626" y2="595" stroke="#C02020" stroke-width="1"/>
<path d="M631 595 L634 588 L640 584 L638 591 Z" fill="#40C0E0" stroke="#204060" stroke-width="0.8"/>
<path d="M645 589 Q650 585 655 587" stroke="#30A030" stroke-width="2.5" fill="none"/><path d="M645 593 Q650 590 656 592" stroke="#808080" stroke-width="1.5" fill="none"/>
<polygon points="660,588 663,588 666,584.5 666,595.5 663,592 660,592" fill="#E8E860" stroke="#404020" stroke-width="0.6"/>
<rect x="673" y="584" width="7" height="6" fill="#40A0A0" stroke="#000" stroke-width="0.8"/><rect x="673" y="591" width="9" height="1.2" fill="#000"/><path d="M679 592 L684 596 M684 592 L679 596" stroke="#E02020" stroke-width="1.3"/>
<rect x="688" y="584" width="7" height="6" fill="#40A0A0" stroke="#000" stroke-width="0.8"/><rect x="688" y="591" width="9" height="1.2" fill="#000"/><path d="M694 592 L699 596 M699 592 L694 596" stroke="#E02020" stroke-width="1.3"/>
<path d="M702 584 L711 595 M711 584 L702 595" stroke="#800030" stroke-width="2.6"/>
<path d="M715 594 L727 594 L727 590 Q721 585 715 590 Z" fill="#60B0A0" stroke="#204040" stroke-width="0.8"/><rect x="715" y="593" width="12" height="2" fill="#2080C0"/><path d="M724 588 L724 583 L726 584" stroke="#000" stroke-width="1" fill="none"/>
<rect x="728.5" y="583.5" width="12" height="12" fill="#30D030" stroke="#106010" stroke-width="0.8"/><path d="M731 587 Q737 587 738 593 M731 590 Q735 590 735.5 593" stroke="#E0FFE0" stroke-width="1" fill="none"/>
</g></svg></body></html>
